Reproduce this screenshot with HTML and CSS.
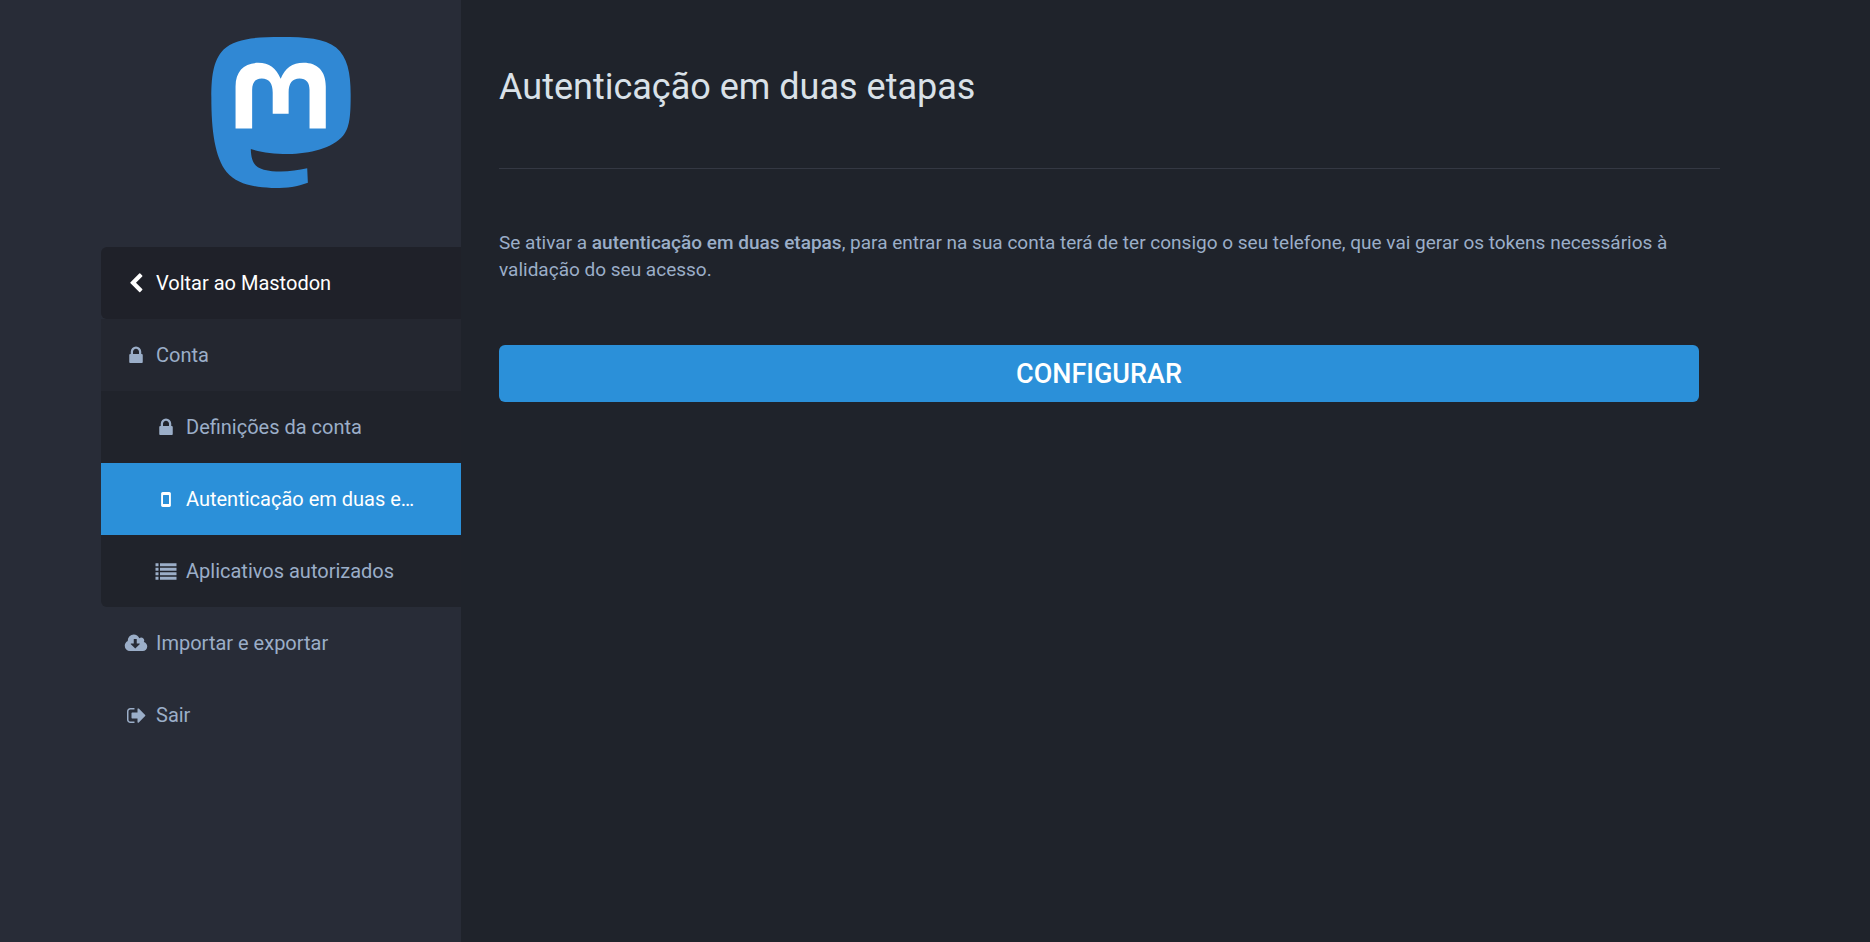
FILE: index.html
```
<!DOCTYPE html>
<html lang="pt">
<head>
    <meta charset="UTF-8">
    <meta name="viewport" content="width=device-width, initial-scale=1.0">
    <title>Autenticação em duas etapas - Mastodon</title>
    <link rel="stylesheet" href="styles.css">
</head>
<body>
    <div class="admin-wrapper">
        <div class="sidebar-wrapper">
            <div class="sidebar">
                <a href="#" class="logo" aria-label="Mastodon">
                    <svg viewBox="63 48 422 456">
                        <path fill="#3088d4" d="M64 230C64 175 68 119 101 86C134 53 195 48 273 48C350 48 405 52 440 80C474 108 484 155 484 222C484 288 481 320 461 346C430 383 360 401 295 401C250 401 215 396 183 386C184 424 194 440 222 448C262 458 310 454 353 444L355 487C320 500 285 504 245 503C182 500 140 489 110 455C75 412 64 330 64 230Z"/>
                        <path fill="#fff" d="M137 324V197C137 151 163 126 205 126C239 126 259 143 273 174C287 143 307 126 342 126C384 126 409 151 409 197V324H360V208C360 185 350 173 330 173C308 173 297 188 297 215V279H249V215C249 188 238 173 216 173C196 173 187 185 187 208V324Z"/>
                    </svg>
                </a>
                <nav>
                    <ul class="menu">
                        <li>
                            <a href="#" class="back">
                                <svg class="icon" viewBox="0 0 1792 1792"><path d="M1427 301l-531 531 531 531q19 19 19 45t-19 45l-166 166q-19 19-45 19t-45-19l-742-742q-19-19-19-45t19-45l742-742q19-19 45-19t45 19l166 166q19 19 19 45t-19 45z"/></svg>
                                <span>Voltar ao Mastodon</span>
                            </a>
                        </li>
                        <li>
                            <a href="#" class="open">
                                <svg class="icon" viewBox="0 0 1792 1792"><path d="M640 768h512v-192q0-106-75-181t-181-75-181 75-75 181v192zm832 96v576q0 40-28 68t-68 28h-960q-40 0-68-28t-28-68v-576q0-40 28-68t68-28h32v-192q0-184 132-316t316-132 316 132 132 316v192h32q40 0 68 28t28 68z"/></svg>
                                <span>Conta</span>
                            </a>
                            <ul class="submenu">
                                <li>
                                    <a href="#">
                                        <svg class="icon" viewBox="0 0 1792 1792"><path d="M640 768h512v-192q0-106-75-181t-181-75-181 75-75 181v192zm832 96v576q0 40-28 68t-68 28h-960q-40 0-68-28t-28-68v-576q0-40 28-68t68-28h32v-192q0-184 132-316t316-132 316 132 132 316v192h32q40 0 68 28t28 68z"/></svg>
                                        <span>Definições da conta</span>
                                    </a>
                                </li>
                                <li>
                                    <a href="#" class="selected">
                                        <svg class="icon" viewBox="0 0 1792 1792"><path fill-rule="evenodd" d="M608 256h576q52 0 90 38t38 90v1024q0 52-38 90t-90 38H608q-52 0-90-38t-38-90V384q0-52 38-90t90-38zM672 512q-32 0-32 32v704q0 32 32 32h448q32 0 32-32V544q0-32-32-32z"/></svg>
                                        <span>Autenticação em duas e…</span>
                                    </a>
                                </li>
                                <li>
                                    <a href="#">
                                        <svg class="icon" viewBox="0 0 1792 1792"><path d="M0 192h256v256H0zM384 192h1408v256H384zM0 576h256v256H0zM384 576h1408v256H384zM0 960h256v256H0zM384 960h1408v256H384zM0 1344h256v256H0zM384 1344h1408v256H384z"/></svg>
                                        <span>Aplicativos autorizados</span>
                                    </a>
                                </li>
                            </ul>
                        </li>
                        <li>
                            <a href="#">
                                <svg class="icon" viewBox="0 0 1920 1792"><path d="M1280 928q0-14-9-23t-23-9h-224v-352q0-13-9.5-22.5t-22.5-9.5h-192q-13 0-22.5 9.5t-9.5 22.5v352h-224q-13 0-22.5 9.5t-9.5 22.5q0 14 9 23l352 352q9 9 23 9t23-9l351-351q10-12 10-24zm640 224q0 159-112.5 271.5t-271.5 112.5h-1088q-185 0-316.5-131.5t-131.5-316.5q0-130 70-240t188-165q-2-30-2-43 0-212 150-362t362-150q156 0 285.5 87t188.5 231q71-62 166-62 106 0 181 75t75 181q0 76-41 138 130 31 213.5 135.5t83.5 238.5z"/></svg>
                                <span>Importar e exportar</span>
                            </a>
                        </li>
                        <li>
                            <a href="#">
                                <svg class="icon" viewBox="0 0 1664 1792"><path d="M704 1440q0 4 1 20t.5 26.5-3 23.5-10 19.5-20.5 6.5h-320q-119 0-203.5-84.5t-84.5-203.5v-704q0-119 84.5-203.5t203.5-84.5h320q13 0 22.5 9.5t9.5 22.5q0 4 1 20t.5 26.5-3 23.5-10 19.5-20.5 6.5h-320q-66 0-113 47t-47 113v704q0 66 47 113t113 47h312l11.5 1 11.5 3 8 5.5 7 9 2 13.5zm928-544q0 26-19 45l-544 544q-19 19-45 19t-45-19-19-45v-288h-448q-26 0-45-19t-19-45v-384q0-26 19-45t45-19h448v-288q0-26 19-45t45-19 45 19l544 544q19 19 19 45z"/></svg>
                                <span>Sair</span>
                            </a>
                        </li>
                    </ul>
                </nav>
            </div>
        </div>
        <main class="content-wrapper">
            <div class="content">
                <h2>Autenticação em duas etapas</h2>
                <div class="simple-form">
                    <p class="hint">Se ativar a <strong>autenticação em duas etapas</strong>, para entrar na sua conta terá de ter consigo o seu telefone, que vai gerar os tokens necessários à validação do seu acesso.</p>
                    <button type="button" class="button">Configurar</button>
                </div>
            </div>
        </main>
    </div>
</body>
</html>
```

FILE: styles.css
```
* {
    box-sizing: border-box;
}
body {
    margin: 0;
    font-family: Roboto, sans-serif;
    font-size: 20px;
    line-height: 27px;
    color: #9baec8;
    background-color: #1f232b;
}
ul {
    list-style: none;
    margin: 0;
    padding: 0;
}
.admin-wrapper {
    display: flex;
    min-height: 100vh;
}
.sidebar-wrapper {
    flex: 1 1 386px;
    display: flex;
    justify-content: flex-end;
    background-color: #282c37;
}
.sidebar {
    width: 360px;
}
.logo {
    display: block;
    width: 140px;
    margin: 37px auto 59px;
}
.logo svg {
    display: block;
    width: 100%;
}
.menu a {
    display: flex;
    align-items: center;
    gap: 6px;
    height: 72px;
    padding: 0 21px;
    color: #9baec8;
    text-decoration: none;
    white-space: nowrap;
}
.menu .back {
    color: #fff;
    background-color: #1f2129;
    border-radius: 6px 0 0 6px;
}
.menu .open {
    background-color: #242730;
}
.submenu {
    background-color: #20232b;
    border-radius: 0 0 0 6px;
}
.menu .submenu a {
    padding-left: 51px;
}
.menu .selected {
    color: #fff;
    background-color: #2b90d9;
}
.icon {
    flex: none;
    width: 28px;
    height: 21px;
    fill: currentColor;
}
.content-wrapper {
    flex: 2 1 1259px;
}
.content {
    max-width: 1259px;
    padding: 60px 0 38px 38px;
}
h2 {
    margin: 0 0 60px;
    padding-bottom: 54px;
    font-size: 36px;
    font-weight: 400;
    line-height: 54px;
    color: #d9e1e8;
    border-bottom: 1px solid #343843;
}
.simple-form {
    margin-right: 21px;
}
.hint {
    margin: 0 0 62px;
    font-size: 19px;
}
.hint strong {
    font-weight: 500;
}
.button {
    display: block;
    width: 100%;
    height: 57px;
    padding: 0 15px;
    border: 0;
    border-radius: 6px;
    font-family: inherit;
    font-size: 27px;
    font-weight: 500;
    text-transform: uppercase;
    color: #fff;
    background-color: #2b90d9;
    cursor: pointer;
}
.button:hover {
    background-color: #56a7e1;
}
```
